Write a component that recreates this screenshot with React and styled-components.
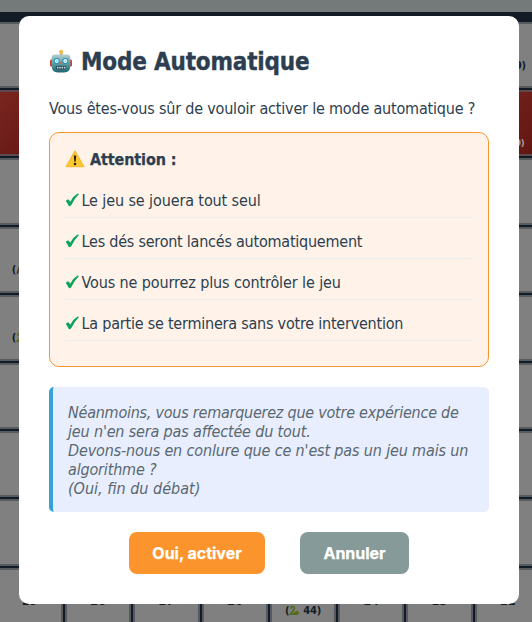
import React from "react";
import styled, { createGlobalStyle } from "styled-components";

const Global = createGlobalStyle`
  * { box-sizing: border-box; }
  html, body { margin: 0; height: 100%; overflow: hidden; }
  body { background: #747979; }
`;

const Page = styled.div`
  height: 622px;
  width: 532px;
  overflow: hidden;
  display: grid;
  font-family: "DejaVu Sans Condensed", "DejaVu Sans", sans-serif;
  color: #2c3e50;
`;

const BoardArea = styled.div`
  grid-area: 1 / 1;
  height: 622px;
  width: 532px;
  padding-top: 12px;
  overflow: hidden;
  background: #747979;
`;

const Board = styled.div`
  background: #131c26;
  width: 560px;
  margin-left: -3.3px;
  padding-top: 10px;
  display: grid;
  grid-template-columns: repeat(8, 66.3px);
  grid-auto-rows: 66.2px;
  gap: 2px;
`;

const Cell = styled.div`
  border: 2px solid ${(p) => (p.$red ? "#5d4a4f" : "#565b60")};
  border-radius: 3px;
  background: ${(p) => (p.$red ? "linear-gradient(135deg, #7a2520, #601511)" : "#808080")};
  color: ${(p) => (p.$red ? "#a9a0a0" : "#131c26")};
  display: flex;
  flex-direction: column;
  align-items: center;
  justify-content: center;
  font-size: 12.5px;
  line-height: 15px;
  font-weight: 700;
  padding-top: ${(p) => (p.$red ? "34px" : "0")};
`;

const Jump = styled.span`
  display: flex;
  align-items: center;
  font-size: ${(p) => (p.$small ? "9.5px" : "11px")};
  line-height: 17px;
  letter-spacing: -0.2px;
  padding-top: 5px;

  svg { margin-right: 3px; }
`;

const Overlay = styled.div`
  grid-area: 1 / 1;
  z-index: 1;
  display: flex;
  align-items: flex-start;
  padding: 16px 13px 0 19px;
`;

const Modal = styled.section`
  width: 500px;
  height: 588px;
  padding: 30px;
  border-radius: 10px;
  background: #fff;
`;

const Title = styled.h2`
  margin: 0;
  height: 31px;
  display: flex;
  align-items: center;
  gap: 8px;
  font-size: 24px;
  line-height: 31px;
  letter-spacing: -0.19px;
  color: #2c3e50;
  -webkit-text-stroke: 0.35px #2c3e50;

  span { padding-top: 2px; }
  svg { margin-top: -2px; }
`;

const Question = styled.p`
  margin: 22px 0 13px;
  font-size: 16px;
  line-height: 20px;
  letter-spacing: -0.19px;
  white-space: nowrap;
`;

const Warning = styled.div`
  height: 235px;
  padding: 15px;
  border: 1px solid #f9952c;
  border-radius: 10px;
  background: #fff3e9;
`;

const WarningTitle = styled.strong`
  display: flex;
  align-items: center;
  gap: 5px;
  font-size: 16px;
  line-height: 20px;
  height: 20px;
  letter-spacing: -0.12px;
  -webkit-text-stroke: 0.25px #2c3e50;

  span { padding-top: 3px; }
  svg { margin-top: 2px; }
`;

const List = styled.ul`
  list-style: none;
  margin: 9px 0 0;
  padding: 0;
`;

const Item = styled.li`
  height: 41px;
  padding-top: 6px;
  border-bottom: 1px solid #e8eef0;
  display: flex;
  align-items: center;
  gap: 1.5px;
  font-size: 16px;
  letter-spacing: ${(p) => p.$track}px;
`;

const Note = styled.div`
  margin-top: 20px;
  height: 125px;
  padding: 16px 0 14px 15px;
  border-left: 4px solid #36a2da;
  border-radius: 5px;
  background: #e8eefd;
  color: #5a6872;
  font-size: 16px;
  font-style: italic;
  line-height: 19px;
`;

const Line = styled.div`
  white-space: nowrap;
  letter-spacing: ${(p) => p.$track}px;
`;

const Actions = styled.div`
  margin-top: 20px;
  display: flex;
  gap: 35px;
  padding-left: 80px;
`;

const Button = styled.button`
  width: ${(p) => p.$width}px;
  height: 42px;
  border: 0;
  padding: 0;
  border-radius: 8px;
  background: ${(p) => (p.$primary ? "#fc942d" : "#879a9a")};
  color: #fff;
  font: 700 16px/42px Inter, sans-serif;
  letter-spacing: -0.02px;
  -webkit-text-stroke: 0.25px #fff;
`;

const Robot = () => (
  <svg width="24" height="24" viewBox="0 0 24 24">
    <defs>
      <linearGradient id="head" x1="0" y1="0" x2="0" y2="1">
        <stop offset="0" stopColor="#b5cfd2" />
        <stop offset=".5" stopColor="#5f9fa8" />
        <stop offset="1" stopColor="#1d6573" />
      </linearGradient>
    </defs>
    <rect x="1" y="10.5" width="3" height="7" rx="1.2" fill="#c94338" />
    <rect x="20" y="10.5" width="3" height="7" rx="1.2" fill="#c94338" />
    <rect x="11" y="3" width="2.4" height="4" fill="#d98d4a" />
    <circle cx="12.1" cy="2.7" r="2" fill="#f4b942" />
    <path d="M6 5.5h12q3.3 0 3.3 3v8.5q0 6.5-6.3 6.5H9q-6.3 0-6.3-6.5V8.5q0-3 3.3-3z" fill="url(#head)" />
    <circle cx="7.7" cy="12" r="3.1" fill="#2595b0" />
    <circle cx="16.3" cy="12" r="3.1" fill="#2595b0" />
    <circle cx="7.7" cy="12" r="2" fill="#e8fcff" />
    <circle cx="16.3" cy="12" r="2" fill="#e8fcff" />
    <circle cx="7.7" cy="12" r=".8" fill="#4fc0da" />
    <circle cx="16.3" cy="12" r=".8" fill="#4fc0da" />
    <path d="M12 12.2l1.7 2.6h-3.4z" fill="#e05a48" />
    <rect x="6.7" y="16.8" width="10.6" height="3.6" rx="1.4" fill="#294e58" />
    <path d="M8 18.6h8.4" stroke="#c5d6d8" strokeWidth="1.6" strokeDasharray="1.5 .8" />
  </svg>
);

const WarnIcon = () => (
  <svg width="20" height="20" viewBox="0 0 20 20">
    <path d="M10 2.2L18.7 17.6H1.3z" fill="#fec92f" stroke="#f4bd35" strokeWidth="1.4" strokeLinejoin="round" />
    <path d="M8.8 6.5h2.4l-.5 6.2H9.3z" fill="#25211a" />
    <circle cx="10" cy="15" r="1.3" fill="#25211a" />
  </svg>
);

const Check = () => (
  <svg width="15" height="14" viewBox="0 0 15 14">
    <path d="M.8 7.9Q2.6 5.9 3.9 6.7L5.2 8.7Q8.2 3.2 12.6.6L14 .9Q9.3 5.5 6.2 12.2Q5.1 13.4 3.8 13.1Q2.6 10 .8 7.9z" fill="#0aa35b" />
  </svg>
);

const Snake = () => (
  <svg width="11" height="11" viewBox="0 0 11 11">
    <path d="M2 3Q2 1.3 4 1.5Q6 2 5 4.5Q3 7 1.5 9H8Q10.5 8 8.5 6.7Q6.5 7 5.5 8.5" fill="none" stroke="#566a1e" strokeWidth="1.8" strokeLinecap="round" />
  </svg>
);

const Ladder = () => (
  <svg width="11" height="11" viewBox="0 0 11 11">
    <path d="M1 10L4 1M7 10L10 1M2 8h5M3 5h5M4 2.5h5" stroke="#4b3323" strokeWidth="1.2" />
  </svg>
);

const jumps = {
  7: [Ladder, "99"],
  15: [Ladder, "80", true],
  24: [Ladder, "67"],
  32: [Snake, "32"],
  68: [Snake, "44"],
};

const items = [
  ["Le jeu se jouera tout seul", -0.11],
  ["Les dés seront lancés automatiquement", -0.23],
  ["Vous ne pourrez plus contrôler le jeu", -0.11],
  ["La partie se terminera sans votre intervention", -0.22],
];

const lines = [
  ["Néanmoins, vous remarquerez que votre expérience de", -0.24],
  ["jeu n'en sera pas affectée du tout.", -0.16],
  ["Devons-nous en conlure que ce n'est pas un jeu mais un", -0.15],
  ["algorithme ?", -0.17],
  ["(Oui, fin du débat)", 0],
];

function BoardCell({ index }) {
  const row = Math.floor(index / 8);
  const jump = jumps[index];
  const Icon = jump && jump[0];
  return (
    <Cell $red={row === 1}>
      {row === 8 && <span>{29 - (index % 8)}</span>}
      {jump && row !== 8 && row !== 1 && <span>{93 - index}</span>}
      {jump && <Jump $small={jump[2]}>(<Icon />{jump[1]})</Jump>}
    </Cell>
  );
}

export default function App() {
  return (
    <Page>
      <Global />
      <BoardArea>
        <Board>
          {Array.from({ length: 72 }, (_, i) => <BoardCell key={i} index={i} />)}
        </Board>
      </BoardArea>
      <Overlay>
        <Modal>
          <Title><Robot /><span>Mode Automatique</span></Title>
          <Question>Vous êtes-vous sûr de vouloir activer le mode automatique ?</Question>
          <Warning>
            <WarningTitle><WarnIcon /><span>Attention :</span></WarningTitle>
            <List>
              {items.map(([t, k]) => <Item key={t} $track={k}><Check /><span>{t}</span></Item>)}
            </List>
          </Warning>
          <Note>
            {lines.map(([t, k]) => <Line key={t} $track={k}>{t}</Line>)}
          </Note>
          <Actions>
            <Button $primary $width={136}>Oui, activer</Button>
            <Button $width={109}>Annuler</Button>
          </Actions>
        </Modal>
      </Overlay>
    </Page>
  );
}
